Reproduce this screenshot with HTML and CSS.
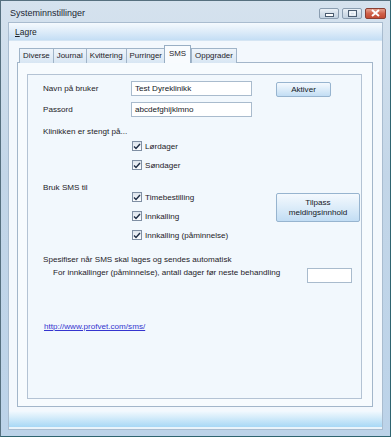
FILE: index.html
```html
<!DOCTYPE html>
<html lang="no">
<head>
    <meta charset="UTF-8">
    <meta name="viewport" content="width=device-width, initial-scale=1.0">
    <title>Systeminnstillinger</title>
    <link rel="stylesheet" href="styles.css">
</head>
<body>
    <div class="window">
        <div class="titlebar">
            <span class="title">Systeminnstillinger</span>
            <div class="caption-buttons">
                <span class="cap cap-min">
                    <svg width="9" height="4" viewBox="0 0 9 4"><rect x="0.5" y="0.5" width="8" height="3" fill="#fff" stroke="#4a5c70"/></svg>
                </span>
                <span class="cap cap-max">
                    <svg width="9" height="7" viewBox="0 0 9 7"><rect x="0.5" y="0.5" width="8" height="6" fill="none" stroke="#4a5c70"/><rect x="2" y="2" width="5" height="3" fill="none" stroke="#fff"/></svg>
                </span>
                <span class="cap cap-close">
                    <svg width="9" height="8" viewBox="0 0 9 8"><path d="M1 1 L8 7 M8 1 L1 7" stroke="#fff" stroke-width="2"/></svg>
                </span>
            </div>
        </div>

        <div class="client">
            <div class="menubar">
                <span class="menu-item"><u>L</u>agre</span>
            </div>

            <div class="content">
                <div class="tabs">
                    <span class="tab">Diverse</span>
                    <span class="tab">Journal</span>
                    <span class="tab">Kvittering</span>
                    <span class="tab">Purringer</span>
                    <span class="tab active">SMS</span>
                    <span class="tab">Oppgrader</span>
                </div>

                <div class="tabpage">
                    <div class="group">
                        <div class="row">
                            <span class="label">Navn på bruker</span>
                            <span class="textbox">Test Dyreklinikk</span>
                            <span class="btn btn-aktiver">Aktiver</span>
                        </div>
                        <div class="row row-second">
                            <span class="label">Passord</span>
                            <span class="textbox">abcdefghijklmno</span>
                        </div>

                        <div class="line closed-title">Klinikken er stengt på...</div>
                        <div class="checklist closed-list">
                            <div class="check"><span class="box"><svg width="8" height="7" viewBox="0 0 8 7"><path d="M1 3.5 L3 5.5 L7 1" fill="none" stroke="#1d2c44" stroke-width="1.4"/></svg></span>Lørdager</div>
                            <div class="check"><span class="box"><svg width="8" height="7" viewBox="0 0 8 7"><path d="M1 3.5 L3 5.5 L7 1" fill="none" stroke="#1d2c44" stroke-width="1.4"/></svg></span>Søndager</div>
                        </div>

                        <div class="sms-section">
                            <span class="label">Bruk SMS til</span>
                            <div class="checklist sms-list">
                                <div class="check"><span class="box"><svg width="8" height="7" viewBox="0 0 8 7"><path d="M1 3.5 L3 5.5 L7 1" fill="none" stroke="#1d2c44" stroke-width="1.4"/></svg></span>Timebestilling</div>
                                <div class="check"><span class="box"><svg width="8" height="7" viewBox="0 0 8 7"><path d="M1 3.5 L3 5.5 L7 1" fill="none" stroke="#1d2c44" stroke-width="1.4"/></svg></span>Innkalling</div>
                                <div class="check"><span class="box"><svg width="8" height="7" viewBox="0 0 8 7"><path d="M1 3.5 L3 5.5 L7 1" fill="none" stroke="#1d2c44" stroke-width="1.4"/></svg></span>Innkalling (påminnelse)</div>
                            </div>
                            <span class="btn btn-tilpass">Tilpass<br>meldingsinnhold</span>
                        </div>

                        <div class="line auto-title">Spesifiser når SMS skal lages og sendes automatisk</div>
                        <div class="days-row">
                            <span class="line">For innkallinger (påminnelse), antall dager før neste behandling</span>
                            <span class="textbox textbox-small"></span>
                        </div>

                        <a class="link" href="#">http://www.profvet.com/sms/</a>
                    </div>
                </div>
            </div>

            <div class="statusbar"></div>
        </div>
    </div>
</body>
</html>
```

FILE: styles.css
```css
* {
    box-sizing: border-box;
}
body {
    margin: 0;
    font-family: "Liberation Sans", Arial, sans-serif;
    font-size: 8.1px;
    color: #1e2228;
    background: #8fb3c9;
}
.window {
    width: 391px;
    height: 437px;
    display: flex;
    flex-direction: column;
    padding: 0 7px 6px 7px;
    border: 1px solid #56707f;
    border-right-color: #2f6470;
    border-bottom-color: #2f6470;
    background: linear-gradient(#d5e2ee, #c3d6e8 40%, #bcd3e9);
}
.titlebar {
    height: 21px;
    display: flex;
    align-items: center;
    justify-content: space-between;
    padding: 2px 0 0 2px;
}
.title {
    font-size: 9px;
    color: #1b2633;
}
.caption-buttons {
    display: flex;
    gap: 3px;
    margin-right: -3px;
    margin-top: 1px;
}
.cap {
    width: 20px;
    height: 11px;
    border: 1px solid #8a9db0;
    border-radius: 2px;
    display: flex;
    align-items: center;
    justify-content: center;
    background: linear-gradient(#e9f0f6, #d3dee9 50%, #c2d2e1);
}
.cap-min svg {
    margin-top: 4px;
}
.cap-close {
    width: 21px;
    border-color: #8a3f33;
    background: linear-gradient(#e5a08e, #d0614a 50%, #c24a33);
}
.client {
    flex: 1;
    display: flex;
    flex-direction: column;
    background: #f3f8fd;
    border: 1px solid #a9bccf;
}
.menubar {
    height: 18px;
    display: flex;
    align-items: center;
    padding-left: 6px;
    background: linear-gradient(#f5fafe, #deecf9 50%, #c4def5);
    border-bottom: 1px solid #d5e5f3;
}
.menu-item {
    font-size: 8.5px;
    color: #1a1f26;
}
.content {
    flex: 1;
    display: flex;
    flex-direction: column;
    padding: 4px 9px 4px 8px;
}
.tabs {
    display: flex;
    align-items: flex-end;
    padding-left: 2px;
    position: relative;
    z-index: 1;
    margin-bottom: -1px;
}
.tab {
    height: 15px;
    padding: 0 3px;
    line-height: 13px;
    font-size: 7.9px;
    border: 1px solid #a0b4c8;
    border-bottom: none;
    margin-right: -1px;
    background: linear-gradient(#eef4fa, #d8e6f3);
    color: #1e2228;
}
.tab.active {
    height: 18px;
    line-height: 15px;
    padding: 0 4px;
    background: #f8fbfe;
    border-color: #98aec4;
    margin: 0 0 0 -1px;
    z-index: 2;
}
.tabpage {
    flex: 1;
    display: flex;
    flex-direction: column;
    border: 1px solid #a3b6ca;
    background: #f7fbfe;
    padding: 11px 10px 7px 9px;
}
.group {
    flex: 1;
    border: 1px solid #b4c3d4;
    background: #f2f8fd;
    padding: 6px 3px 0 15px;
    display: flex;
    flex-direction: column;
}
.row {
    display: flex;
    align-items: flex-start;
    height: 15px;
}
.row-second {
    margin-top: 6px;
}
.label {
    width: 88px;
    flex-shrink: 0;
    line-height: 15px;
}
.textbox {
    width: 121px;
    height: 15px;
    flex-shrink: 0;
    border: 1px solid #a9bbcd;
    background: #fff;
    padding: 0 3px;
    line-height: 13px;
    color: #14181e;
}
.btn {
    display: flex;
    align-items: center;
    justify-content: center;
    text-align: center;
    flex-shrink: 0;
    border: 1px solid #97b4cf;
    border-radius: 2px;
    background: linear-gradient(#f4f9fe, #dcecf9 50%, #c2ddf4);
    color: #14181e;
}
.btn-aktiver {
    width: 55px;
    height: 15px;
    margin: 1px 0 0 24px;
}
.line {
    line-height: 12px;
}
.closed-title {
    margin-top: 9px;
}
.checklist {
    display: flex;
    flex-direction: column;
    gap: 7px;
}
.closed-list {
    margin: 2px 0 0 89px;
}
.check {
    display: flex;
    align-items: center;
    height: 12px;
}
.box {
    width: 10px;
    height: 10px;
    margin-right: 3px;
    border: 1px solid #7f8fa3;
    background: linear-gradient(#dde4ec, #fdfeff);
    display: flex;
    align-items: center;
    justify-content: center;
}
.sms-section {
    display: flex;
    align-items: flex-start;
    margin-top: 11px;
}
.sms-section .label {
    line-height: 12px;
}
.sms-list {
    width: 145px;
    flex-shrink: 0;
    padding: 9px 0 0 1px;
}
.btn-tilpass {
    width: 84px;
    height: 29px;
    margin-top: 11px;
    line-height: 10px;
}
.auto-title {
    margin-top: 13px;
}
.days-row {
    display: flex;
    align-items: flex-start;
    justify-content: space-between;
    padding: 0 6px 0 10px;
    margin-top: 1px;
}
.textbox-small {
    width: 45px;
    margin-top: 1px;
}
.link {
    margin: 38px 0 0 1px;
    line-height: 12px;
    color: #3535cf;
    text-decoration: underline;
    align-self: flex-start;
}
.statusbar {
    height: 18px;
    background: linear-gradient(#f2f9fe, #d5ecfa 40%, #a8d8f5);
    border-bottom: 2px solid #eaf4fb;
}
```
